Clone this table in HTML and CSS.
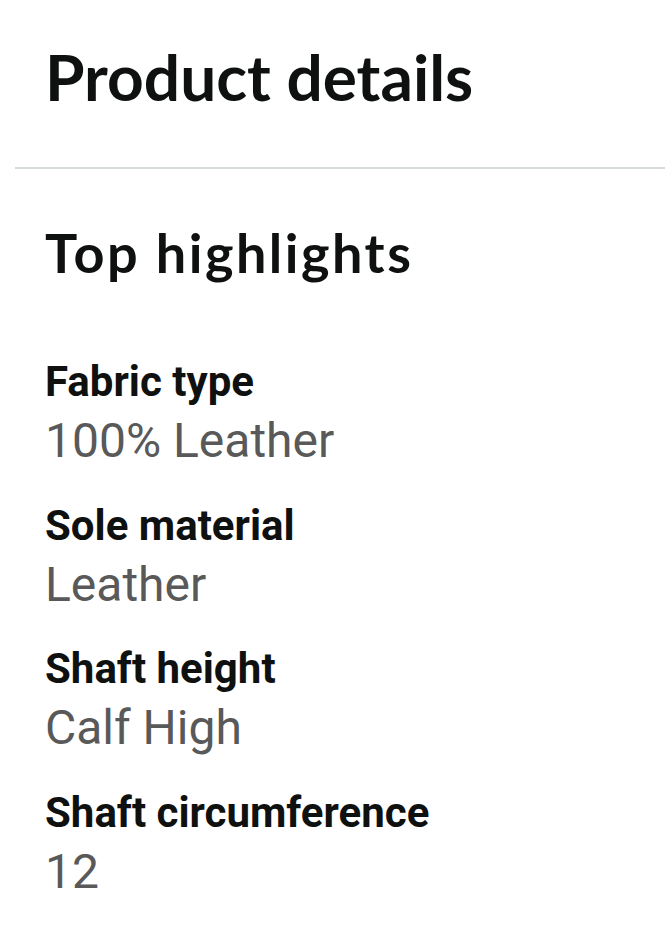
FILE: index.html
```html
<!DOCTYPE html>
<html lang="en">
<head>
<meta charset="utf-8">
<title>Product details</title>
<link rel="stylesheet" href="styles.css">
</head>
<body>
<main class="page">
  <h1 class="title">Product details</h1>
  <hr class="divider">
  <h2 class="subtitle">Top highlights</h2>
  <dl class="specs">
    <div class="spec">
      <dt class="spec-label">Fabric type</dt>
      <dd class="spec-value">100% Leather</dd>
    </div>
    <div class="spec">
      <dt class="spec-label">Sole material</dt>
      <dd class="spec-value">Leather</dd>
    </div>
    <div class="spec">
      <dt class="spec-label">Shaft height</dt>
      <dd class="spec-value">Calf High</dd>
    </div>
    <div class="spec">
      <dt class="spec-label">Shaft circumference</dt>
      <dd class="spec-value">12</dd>
    </div>
  </dl>
</main>
</body>
</html>
```

FILE: styles.css
```css
html, body {
  margin: 0;
  padding: 0;
  background: #ffffff;
}

.page {
  padding-top: 38px;
  color: #0f1111;
}

.title {
  margin: 0 0 0 45px;
  font-family: Lato, "Open Sans", sans-serif;
  font-weight: 700;
  font-size: 64px;
  line-height: 77px;
  color: #0f1111;
}

.divider {
  margin: 52px 0 0 15px;
  border: 0;
  height: 2px;
  background: #d5dbdb;
}

.subtitle {
  margin: 51px 0 0 45px;
  font-family: Lato, "Open Sans", sans-serif;
  font-weight: 700;
  font-size: 54px;
  line-height: 65px;
  letter-spacing: 2.5px;
  color: #0f1111;
}

.specs {
  margin: 72px 0 0 45px;
  display: flex;
  flex-direction: column;
  gap: 30.7px;
}

.spec {
  display: flex;
  flex-direction: column;
}

.spec-label {
  font-family: Roboto, sans-serif;
  font-weight: 700;
  font-size: 42px;
  line-height: 50px;
  color: #0f1111;
}

.spec-value {
  margin: 5px 0 0 0;
  font-family: Roboto, sans-serif;
  font-weight: 400;
  font-size: 48px;
  line-height: 58px;
  color: #595959;
}
```
